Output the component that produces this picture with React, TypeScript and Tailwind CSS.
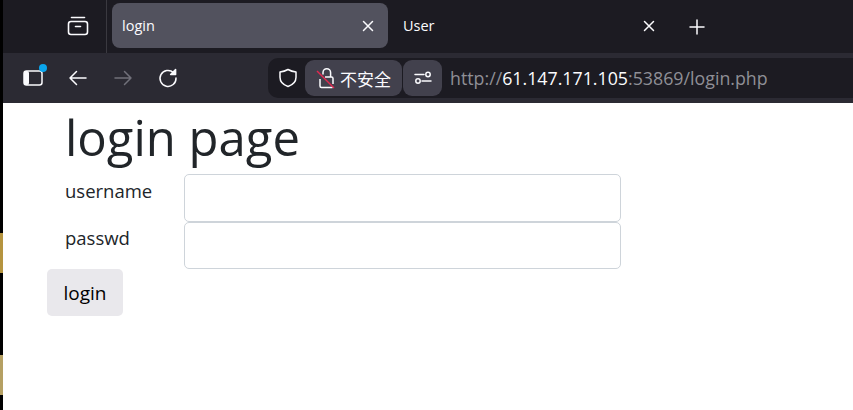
import React from "react";

const ui = { fontFamily: '"Open Sans","Noto Sans CJK SC",sans-serif' };

function TabClose() {
  return (
    <svg width="12" height="12" viewBox="0 0 12 12" fill="none" stroke="#fbfbfe" strokeWidth="1.5" strokeLinecap="round">
      <path d="M1.5 1.5 10.5 10.5M10.5 1.5 1.5 10.5" />
    </svg>
  );
}

export default function App() {
  return (
    <div className="flex h-[410px] w-[853px] overflow-hidden bg-black" style={ui}>
      <div className="flex w-[3px] shrink-0 flex-col bg-black">
        <div className="h-[233px] shrink-0" />
        <div className="h-[40px] shrink-0 bg-[#b5943f]" />
        <div className="h-[82px] shrink-0" />
        <div className="h-[40px] shrink-0 bg-[#b5a063]" />
      </div>
      <div className="flex min-w-0 flex-1 flex-col">
        {/* tab strip */}
        <div className="flex h-[53px] shrink-0 items-stretch bg-[#1c1b22]">
          <div className="flex w-[104px] shrink-0 items-center justify-end border-r border-[#3a3940] pb-[1px] pr-[17px]">
            <svg width="22" height="20" viewBox="0 0 22 20" fill="none" stroke="#fbfbfe" strokeWidth="1.6" strokeLinecap="round" strokeLinejoin="round">
              <path d="M4.500 1.500h13" />
              <rect x="1.500" y="5.500" width="19" height="13" rx="2.500" />
              <path d="M8.500 10.500h5" />
            </svg>
          </div>
          <div className="ml-[5px] mt-[3px] flex h-[45px] w-[276px] shrink-0 items-center justify-between rounded-[8px] bg-[#52525e] pl-[10px] pr-[14px] text-[14.500px] text-[#fbfbfe]">
            <span>login</span>
            <TabClose />
          </div>
          <div className="mt-[3px] flex h-[45px] w-[281px] shrink-0 items-center justify-between pl-[15px] pr-[14px] text-[14.500px] text-[#fbfbfe]">
            <span>User</span>
            <TabClose />
          </div>
          <div className="ml-[20px] flex items-center">
            <svg width="16" height="16" viewBox="0 0 16 16" fill="none" stroke="#fbfbfe" strokeWidth="1.500" strokeLinecap="round">
              <path d="M8 1v14M1 8h14" />
            </svg>
          </div>
        </div>
        {/* toolbar */}
        <div className="flex h-[50px] shrink-0 items-center bg-[#2b2a33]">
          <div className="relative ml-[20px] flex h-[16px] w-[20px] shrink-0 items-center">
            <svg width="20" height="16" viewBox="0 0 20 16" fill="none">
              <rect x="1" y="1" width="18" height="14" rx="2.500" stroke="#fbfbfe" strokeWidth="1.500" />
              <rect x="1" y="1" width="5" height="14" rx="2" fill="#fbfbfe" />
            </svg>
            <span className="absolute right-[-4px] top-[-6px] h-[8px] w-[8px] rounded-full bg-[#0aa5ec]" />
          </div>
          <svg className="ml-[25px] shrink-0" width="20" height="16" viewBox="0 0 20 16" fill="none" stroke="#fbfbfe" strokeWidth="1.500" strokeLinecap="round" strokeLinejoin="round">
            <path d="M2 8h16M8.500 1.500 2 8l6.500 6.500" />
          </svg>
          <svg className="ml-[25px] shrink-0" width="20" height="16" viewBox="0 0 20 16" fill="none" stroke="#71707a" strokeWidth="1.500" strokeLinecap="round" strokeLinejoin="round">
            <path d="M2 8h16M11.500 1.500 18 8l-6.500 6.500" />
          </svg>
          <svg className="ml-[25px] shrink-0" width="20" height="20" viewBox="0 0 20 20" fill="none" stroke="#fbfbfe" strokeWidth="1.500" strokeLinecap="round" strokeLinejoin="round">
            <path d="M15.500 4.600A8 8 0 1 0 18 10" />
            <path d="M17.600 1.600v5h-5z" fill="#fbfbfe" />
          </svg>
          <div className="ml-[90px] flex h-[40px] flex-1 items-center rounded-l-[10px] bg-[#1c1b22]">
            <svg className="ml-[10px] shrink-0" width="20" height="20" viewBox="0 0 20 20" fill="none" stroke="#fbfbfe" strokeWidth="1.500" strokeLinejoin="round">
              <path d="M10 1.500c2.500 1.400 5 2.200 8 2.600v5.200c0 4.400-3.200 7.600-8 9.200-4.800-1.600-8-4.800-8-9.200V4.100c3-.4 5.500-1.200 8-2.600z" />
            </svg>
            <div className="ml-[7px] flex h-[36px] w-[97px] shrink-0 items-center rounded-[9px] bg-[#42414d] pl-[11px] text-[#fbfbfe]">
              <svg className="shrink-0" width="20" height="22" viewBox="0 0 20 22" fill="none" strokeWidth="1.500">
                <path d="M7 7.500V5.500a3.800 3.800 0 0 1 7.600 0V10" stroke="#fbfbfe" />
                <path d="M4 12v7a1.500 1.500 0 0 0 1.500 1.500h10a1.500 1.500 0 0 0 1-.4M17 17v-5.500a1.500 1.500 0 0 0-1.500-1.500H9" stroke="#fbfbfe" />
                <path d="M1 4 18 21" stroke="#e22850" />
              </svg>
              <span className="ml-[4px] text-[17px] leading-none" style={{ fontFamily: '"Noto Sans CJK SC",sans-serif' }}>不安全</span>
            </div>
            <div className="ml-[1px] flex h-[36px] w-[39px] shrink-0 items-center justify-center rounded-[9px] bg-[#42414d]">
              <svg width="18" height="14" viewBox="0 0 18 14" fill="none" stroke="#fbfbfe" strokeWidth="1.500" strokeLinecap="round">
                <circle cx="14" cy="3.500" r="2.200" />
                <path d="M1 3.500h9" />
                <circle cx="4" cy="10" r="2.200" />
                <path d="M8 10h9" />
              </svg>
            </div>
            <div className="ml-[8px] whitespace-nowrap text-[17.800px] text-[#8f8f96]">
              http://<span className="text-[#fbfbfe]">61.147.171.105</span>:53869/login.php
            </div>
          </div>
        </div>
        {/* page */}
        <div className="min-h-0 flex-1 bg-white text-[#212529]">
          <div className="pl-[62px]">
            <h1 className="h-[71px] text-[49px] leading-[68px]">login page</h1>
            <div className="flex h-[48px]">
              <label className="w-[119px] pt-[3px] text-[18.500px] leading-[28px]">username</label>
              <input className="h-[48px] w-[437px] rounded-[5px] border border-[#ced4da] bg-white" />
            </div>
            <div className="flex h-[47px]">
              <label className="w-[119px] pt-[2px] text-[18.500px] leading-[28px]">passwd</label>
              <input type="password" className="h-[47px] w-[437px] rounded-[5px] border border-[#ced4da] bg-white" />
            </div>
          </div>
          <button className="ml-[44px] h-[47px] w-[76px] rounded-[5px] bg-[#e9e8ec] pt-[2px] text-[19px] text-black">login</button>
        </div>
      </div>
    </div>
  );
}
